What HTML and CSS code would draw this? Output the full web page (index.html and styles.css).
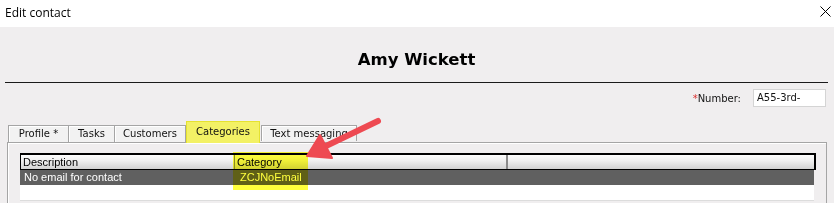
FILE: index.html
```html
<!DOCTYPE html>
<html>
<head>
<meta charset="utf-8">
<link rel="stylesheet" href="styles.css">
</head>
<body>
<div class="titlebar">
  <span class="title">Edit contact</span>
  <svg class="close" width="11" height="11" viewBox="0 0 11 11"><path d="M0.5 0.5 L10.5 10.5 M10.5 0.5 L0.5 10.5" stroke="#000" stroke-width="1"/></svg>
</div>
<div class="content">
  <h1 class="name">Amy Wickett</h1>
  <div class="rule"></div>
  <div class="numrow">
    <span class="label"><span class="req">*</span>Number:</span>
    <span class="input">A55-3rd-</span>
  </div>
  <div class="tabs">
    <div class="tab t-profile">Profile *</div>
    <div class="tab t-tasks">Tasks</div>
    <div class="tab t-cust">Customers</div>
    <div class="tab t-cat selected">Categories</div>
    <div class="tab t-text">Text messaging</div>
  </div>
  <div class="panel">
    <div class="grid">
      <div class="ghead">
        <div class="c c1">Description</div>
        <div class="c c2">Category</div>
        <div class="c c3"></div>
      </div>
      <div class="grow">
        <div class="c c1">No email for contact</div>
        <div class="c c2">ZCJNoEmail</div>
        <div class="c c3"></div>
      </div>
      <div class="gempty"></div>
      <div class="hilite"></div>
    </div>
  </div>
</div>
<svg class="arrow" width="834" height="203" viewBox="0 0 834 203">
  <line x1="378" y1="121" x2="326" y2="146" stroke="#ee4a52" stroke-width="6" stroke-linecap="round"/>
  <polygon points="307,156 320,135 332,158" fill="#ee4a52" stroke="#ee4a52" stroke-width="2" stroke-linejoin="round"/>
</svg>
</body>
</html>
```
FILE: styles.css
```css
html, body {
  margin: 0;
  padding: 0;
}
body {
  width: 834px;
  height: 203px;
  overflow: hidden;
  background: #f0eeef;
  font-family: "DejaVu Sans", sans-serif;
  font-size: 10px;
  color: #000;
  position: relative;
}
.titlebar {
  height: 27px;
  background: #ffffff;
  display: flex;
  align-items: center;
  justify-content: space-between;
  padding: 0 3px 0 5px;
}
.title {
  font-family: "Open Sans", "Liberation Sans", sans-serif;
  font-size: 12px;
  color: #000;
  margin-top: -3px;
}
.close {
  margin-top: -4px;
}
.content {
  padding: 0 6px 0 5px;
}
.name {
  margin: 23px 0 0 0;
  height: 20px;
  line-height: 20px;
  text-align: center;
  font-family: "DejaVu Sans", sans-serif;
  font-weight: bold;
  font-size: 16.5px;
  color: #000;
}
.rule {
  margin-top: 12px;
  height: 1px;
  background: #1a1a1a;
}
.numrow {
  margin-top: 6px;
  height: 18px;
  display: flex;
  justify-content: flex-end;
  align-items: center;
  gap: 12px;
  padding-right: 2px;
}
.label {
  font-size: 10px;
  color: #111;
}
.req {
  color: #d9302f;
}
.input {
  box-sizing: border-box;
  width: 73px;
  height: 18px;
  background: #fff;
  border: 1px solid #d4d4d4;
  padding-left: 3px;
  line-height: 16px;
  font-size: 10px;
  color: #111;
}
.tabs {
  margin-top: 14px;
  margin-left: 3px;
  height: 21px;
  display: flex;
  align-items: flex-end;
  position: relative;
  z-index: 2;
}
.tab {
  box-sizing: border-box;
  height: 17px;
  line-height: 15px;
  border: 1px solid #a5a5a5;
  border-bottom: none;
  background: #f2f2f2;
  box-shadow: inset 1px 1px 0 #ffffff;
  text-align: center;
  font-size: 10px;
  color: #111;
  margin-bottom: 0;
}
.t-profile { width: 61px; }
.t-tasks { width: 47px; margin-left: -1px; }
.t-cust { width: 72px; margin-left: -1px; }
.t-cat { width: 74px; margin-left: 0; }
.t-text { width: 96px; margin-left: 1px; height: 16px; margin-bottom: 1px; }
.tab.selected {
  height: 22px;
  line-height: 20px;
  background: #f3f165;
  border: 1px solid #e5e230;
  border-bottom: none;
  box-shadow: none;
  margin-bottom: -1px;
}
.panel {
  margin-left: 2px;
  margin-right: 1px;
  border: 1px solid #a5a5a5;
  border-bottom: none;
  box-shadow: inset 1px 1px 0 #ffffff;
  padding: 10px 10px 0 12px;
  height: 60px;
}
.grid {
  position: relative;
  width: 796px;
}
.ghead {
  box-sizing: border-box;
  height: 17px;
  display: flex;
  border: 1px solid #000;
  border-top-width: 2px;
  border-right-width: 2px;
  background: linear-gradient(#fdfdfd, #f0f0f0 40%, #d2d2d2);
  font-family: "Liberation Sans", sans-serif;
  font-size: 11px;
  line-height: 14px;
}
.c {
  box-sizing: border-box;
  white-space: nowrap;
  overflow: hidden;
}
.c1 { width: 213px; padding-left: 2px; }
.c2 { width: 272px; padding-left: 2px; border-left: 1px solid #8a8a8a; }
.c3 { flex: 1; border-left: 2px solid #8a8a8a; }
.grow {
  height: 15px;
  width: 794px;
  display: flex;
  background: #606060;
  color: #ffffff;
  font-family: "Liberation Sans", sans-serif;
  font-size: 11px;
  line-height: 15px;
}
.grow .c1 { padding-left: 4px; width: 214px; }
.grow .c2 { border-left: none; padding-left: 6px; width: 272px; }
.grow .c3 { border-left: none; }
.gempty {
  height: 15px;
  width: 794px;
  background: #ffffff;
  border-bottom: 1px solid #dcdcdc;
}
.hilite {
  position: absolute;
  left: 213px;
  top: -1px;
  width: 75px;
  height: 38px;
  background: #ffff3c;
  mix-blend-mode: multiply;
}
.arrow {
  position: absolute;
  left: 0;
  top: 0;
  pointer-events: none;
  z-index: 5;
}
```
